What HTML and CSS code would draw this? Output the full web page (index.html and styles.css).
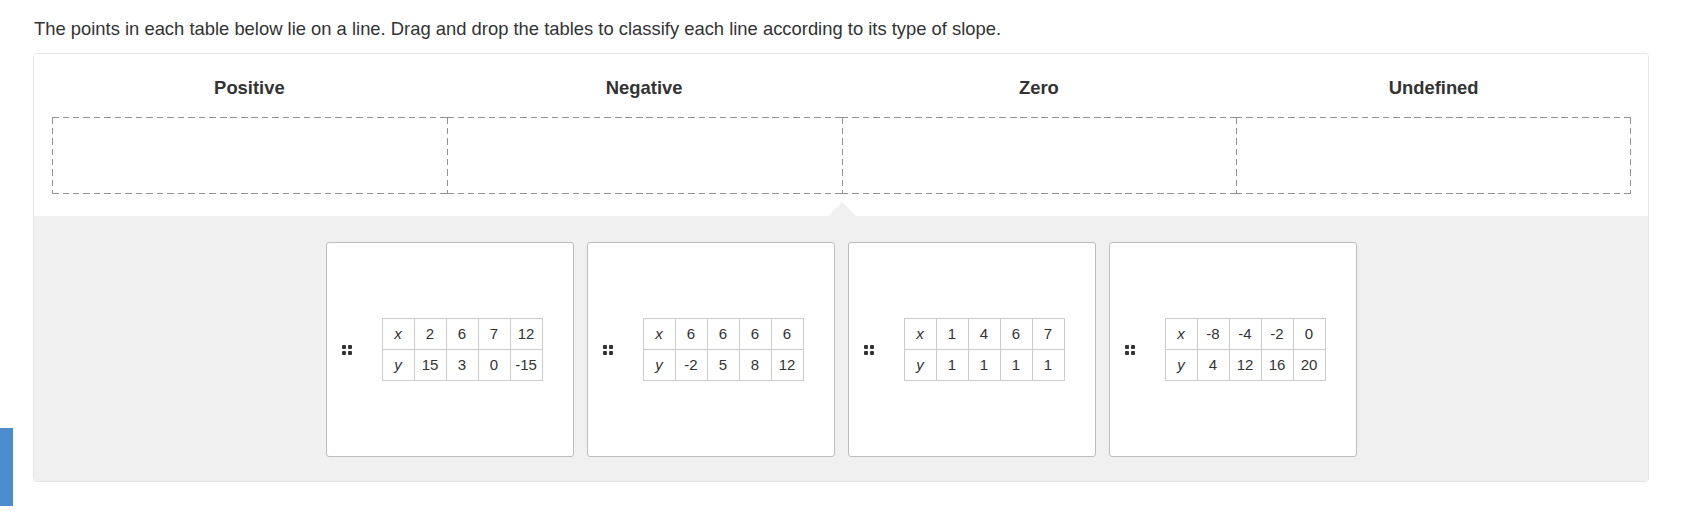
FILE: index.html
```html
<!DOCTYPE html>
<html>
<head>
<meta charset="utf-8">
<link rel="stylesheet" href="styles.css">
</head>
<body>
<p class="prompt">The points in each table below lie on a line. Drag and drop the tables to classify each line according to its type of slope.</p>
<div class="board">
  <div class="top">
    <div class="heads">
      <div class="head">Positive</div>
      <div class="head">Negative</div>
      <div class="head">Zero</div>
      <div class="head">Undefined</div>
    </div>
    <div class="zones">
      <div class="zone"></div>
      <div class="zone"></div>
      <div class="zone"></div>
      <div class="zone"></div>
    </div>
  </div>
  <div class="tray">
    <span class="pointer"></span>
    <div class="card">
      <span class="grip"><i></i><i></i><i></i><i></i></span>
      <table class="pts">
        <tr><td class="v">x</td><td>2</td><td>6</td><td>7</td><td>12</td></tr>
        <tr><td class="v">y</td><td>15</td><td>3</td><td>0</td><td>-15</td></tr>
      </table>
    </div>
    <div class="card">
      <span class="grip"><i></i><i></i><i></i><i></i></span>
      <table class="pts">
        <tr><td class="v">x</td><td>6</td><td>6</td><td>6</td><td>6</td></tr>
        <tr><td class="v">y</td><td>-2</td><td>5</td><td>8</td><td>12</td></tr>
      </table>
    </div>
    <div class="card">
      <span class="grip"><i></i><i></i><i></i><i></i></span>
      <table class="pts">
        <tr><td class="v">x</td><td>1</td><td>4</td><td>6</td><td>7</td></tr>
        <tr><td class="v">y</td><td>1</td><td>1</td><td>1</td><td>1</td></tr>
      </table>
    </div>
    <div class="card">
      <span class="grip"><i></i><i></i><i></i><i></i></span>
      <table class="pts">
        <tr><td class="v">x</td><td>-8</td><td>-4</td><td>-2</td><td>0</td></tr>
        <tr><td class="v">y</td><td>4</td><td>12</td><td>16</td><td>20</td></tr>
      </table>
    </div>
  </div>
</div>
<div class="sidetab"></div>
</body>
</html>
```
FILE: styles.css
```css
html, body {
  margin: 0;
  padding: 0;
  background: #ffffff;
}
body {
  font-family: "Liberation Sans", Arial, sans-serif;
  color: #333333;
  position: relative;
  height: 526px;
  overflow: hidden;
}
.prompt {
  margin: 0;
  padding: 17px 0 0 34px;
  font-size: 18.4px;
  line-height: 24px;
  height: 36px;
  box-sizing: content-box;
}
.board {
  margin-left: 33px;
  width: 1614px;
  border: 1px solid #e6e6e6;
  border-radius: 4px;
  overflow: hidden;
}
.top {
  background: #ffffff;
  padding: 22px 17px 22px 18px;
}
.heads {
  display: grid;
  grid-template-columns: repeat(4, 1fr);
  margin-bottom: 17px;
}
.head {
  text-align: center;
  font-weight: bold;
  font-size: 18.4px;
  line-height: 24px;
  color: #333333;
}
.zones {
  display: grid;
  grid-template-columns: repeat(4, 1fr);
}
.zone {
  height: 77px;
  background:
    repeating-linear-gradient(90deg, #929292 0 6.5px, transparent 6.5px 10.5px) left top / 100% 1.3px no-repeat,
    repeating-linear-gradient(90deg, #929292 0 6.5px, transparent 6.5px 10.5px) left bottom / 100% 1.3px no-repeat,
    repeating-linear-gradient(180deg, #929292 0 6.5px, transparent 6.5px 10.5px) left top / 1.3px 100% no-repeat;
}
.zone:last-child {
  background:
    repeating-linear-gradient(90deg, #929292 0 6.5px, transparent 6.5px 10.5px) left top / 100% 1.3px no-repeat,
    repeating-linear-gradient(90deg, #929292 0 6.5px, transparent 6.5px 10.5px) left bottom / 100% 1.3px no-repeat,
    repeating-linear-gradient(180deg, #929292 0 6.5px, transparent 6.5px 10.5px) left top / 1.3px 100% no-repeat,
    repeating-linear-gradient(180deg, #929292 0 6.5px, transparent 6.5px 10.5px) right top / 1.3px 100% no-repeat;
}
.tray {
  position: relative;
  background: #f0f0f0;
  padding: 26px 0 24px;
  display: flex;
  justify-content: center;
  gap: 13px;
}
.pointer {
  position: absolute;
  left: 794px;
  top: -14px;
  width: 0;
  height: 0;
  border-left: 14px solid transparent;
  border-right: 14px solid transparent;
  border-bottom: 14px solid #f0f0f0;
}
.card {
  background: #ffffff;
  border: 1px solid #bdbdbd;
  border-radius: 3px;
  display: flex;
  align-items: center;
  padding-left: 15px;
  box-sizing: border-box;
  width: 248px;
  height: 215px;
}
.grip {
  display: grid;
  grid-template-columns: 4px 4px;
  grid-template-rows: 4px 4px;
  gap: 2px;
  margin-right: 30px;
}
.grip i {
  display: block;
  background: #333333;
  border-radius: 1px;
}
.pts {
  border-collapse: collapse;
  font-size: 15px;
  color: #333333;
}
.pts td {
  border: 1px solid #cccccc;
  width: 31px;
  height: 30px;
  padding: 0;
  text-align: center;
  line-height: 16px;
}
.pts td.v {
  font-style: italic;
}
.sidetab {
  position: absolute;
  left: 0;
  top: 428px;
  width: 13px;
  height: 78px;
  background: #4b8dcd;
}
```
